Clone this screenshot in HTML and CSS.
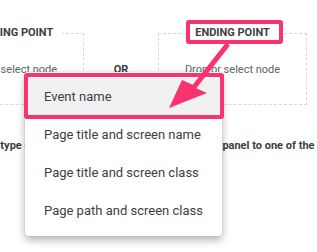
FILE: index.html
```html
<!DOCTYPE html>
<html lang="en">
<head>
    <meta charset="UTF-8">
    <meta name="viewport" content="width=device-width, initial-scale=1.0">
    <title>Path exploration</title>
    <link rel="stylesheet" href="styles.css">
</head>
<body>
    <div class="canvas">
        <div class="nodes">
            <fieldset class="node">
                <legend class="node-label">STARTING POINT</legend>
                <span class="node-hint">Drop or select node</span>
            </fieldset>
            <div class="node-or">OR</div>
            <fieldset class="node">
                <legend class="node-label">ENDING POINT</legend>
                <span class="node-hint">Drop or select node</span>
            </fieldset>
        </div>
        <p class="hint">Drag or select a node type or more dimensions from this Variables panel to one of the boxes above</p>
    </div>

    <!-- annotation -->
    <div class="callout callout-end"></div>
    <svg class="arrow" width="317" height="252" viewBox="0 0 317 252">
        <polygon points="226.2,42.3 229.8,45.7 196.3,88.2 207,93 169,108 182,80 192.7,84.8" fill="#f8336f"/>
    </svg>

    <ul class="menu">
        <li class="menu-item active">Event name</li>
        <li class="menu-item">Page title and screen name</li>
        <li class="menu-item">Page title and screen class</li>
        <li class="menu-item">Page path and screen class</li>
    </ul>
    <div class="callout callout-item"></div>
</body>
</html>
```

FILE: styles.css
```css
* { margin: 0; padding: 0; box-sizing: border-box; }
body {
    font-family: Roboto, 'Noto Sans', sans-serif;
    background: #ffffff;
    width: 317px;
    height: 252px;
    overflow: hidden;
    position: relative;
    color: #3c4043;
}

.canvas {
    padding-top: 26px;
    margin-left: -65px;
    width: 372px;
}

.nodes {
    display: flex;
    align-items: flex-start;
}

.node {
    width: 149px;
    height: 79px;
    border: 1px dashed #d6d8db;
    display: flex;
    align-items: center;
    justify-content: center;
    padding-bottom: 6px;
}

.node-label {
    margin: 0 auto;
    padding: 0 9px;
    font-size: 11px;
    line-height: 14px;
    font-weight: 700;
    color: #3c4043;
    background: #ffffff;
}

.node-hint {
    font-size: 11px;
    color: #5f6368;
}

.node-or {
    width: 74px;
    text-align: center;
    font-size: 11px;
    font-weight: 700;
    margin-top: 37px;
}

.hint {
    margin-top: 34px;
    margin-left: -42px;
    font-size: 11px;
    font-weight: 700;
    white-space: nowrap;
    line-height: 14px;
}

.menu {
    position: absolute;
    left: 25px;
    top: 72px;
    width: 197px;
    padding: 6px 0;
    list-style: none;
    background: #ffffff;
    border-radius: 4px;
    box-shadow: 0 4px 8px rgba(0, 0, 0, 0.3), 0 0 2px rgba(0, 0, 0, 0.12);
}

.menu-item {
    height: 38px;
    line-height: 38px;
    padding-left: 19px;
    font-size: 13px;
    color: #3c4043;
}

.menu-item.active {
    background: #f1f1f1;
}

.callout {
    position: absolute;
    border: 4px solid #f8336f;
    border-radius: 3px;
}

.callout-end {
    left: 186px;
    top: 20px;
    width: 97px;
    height: 24px;
}

.callout-item {
    left: 24px;
    top: 73px;
    width: 200px;
    height: 46px;
}

.arrow {
    position: absolute;
    left: 0;
    top: 0;
    pointer-events: none;
    z-index: 2;
}
```
